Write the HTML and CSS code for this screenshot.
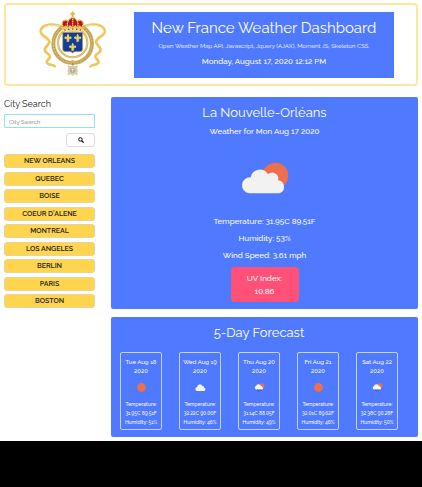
FILE: index.html
```html
<!DOCTYPE html>
<html lang="en">
<head>
<meta charset="utf-8">
<meta name="viewport" content="width=device-width, initial-scale=1">
<title>New France Weather Dashboard</title>
<link rel="stylesheet" href="styles.css">
</head>
<body>
<svg class="defs" aria-hidden="true">
  <symbol id="lily" viewBox="0 0 24 28">
    <path d="M12 0C7 6 8 10 10 14C8 7 1 7 1 13c0 4 4 5 6 2c1 1 2 2 2 3H7v3h3c-1 2-2 3-3 4c2 0 3 0 4-1l1 4 1-4c1 1 2 1 4 1c-1-1-2-2-3-4h3v-3h-2c0-1 1-2 2-3c2 3 6 2 6-2c0-6-7-6-9 1C16 10 17 6 12 0z" fill="#f6d35e"/>
  </symbol>
  <symbol id="sun" viewBox="0 0 10 10"><circle cx="5" cy="5" r="4.9" fill="#ee6f4b"/></symbol>
  <symbol id="cloud" viewBox="0 0 12 8">
    <path d="M2.5 7.7a2 2 0 0 1-.2-4A3 3 0 0 1 8 2.3a1.8 1.8 0 0 1 2 1.9a1.8 1.8 0 0 1 0 3.5z" fill="#f5f5f5"/>
  </symbol>
  <symbol id="rain" viewBox="0 0 11 9">
    <circle cx="7.7" cy="2.9" r="2.7" fill="#ee6f4b"/>
    <path d="M2 6.4a1.7 1.7 0 0 1 .1-3.3a2.4 2.4 0 0 1 4.6-.4a1.5 1.5 0 0 1 1.5 1.3a1.3 1.3 0 0 1 0 2.4z" fill="#f5f5f5"/>
    <path d="M3.5 6.5l-.5 1.4M5.3 6.5l-.7 2M7 6.5l-.5 1.4" stroke="#4a4f68" stroke-width=".8"/>
  </symbol>
</svg>
<div class="page">
  <header class="banner">
    <svg class="crest" viewBox="0 0 225 225" role="img" aria-label="Coat of arms of New France">
      <g fill="none" stroke-linecap="round" stroke-linejoin="round">
        <path d="M78 58C55 49 20 50 17 72c-2 16 22 17 26 31c2 10-18 17-13 29c3 8 14 7 15 17c1 7-13 10-9 18c4 9 18 4 23 11" stroke="#ecc65c" stroke-width="8"/>
        <path d="M148 58C171 49 206 50 209 72c2 16-22 17-26 31c-2 10 18 17 13 29c-3 8-14 7-15 17c-1 7 13 10 9 18c-4 9-18 4-23 11" stroke="#ecc65c" stroke-width="8"/>
        <path d="M76 58C56 51 23 54 20 72c0 10 18 14 24 25M150 58C170 51 203 54 206 72c0 10-18 14-24 25" stroke="#fbe39a" stroke-width="3"/>
        <circle cx="113" cy="110" r="58" stroke="#d5b35c" stroke-width="12"/>
        <circle cx="113" cy="110" r="58" stroke="#b5954b" stroke-width="7" stroke-dasharray="3 7"/>
        <circle cx="113" cy="110" r="58" stroke="#f6e3a8" stroke-width="2" stroke-dasharray="5 4"/>
        <circle cx="113" cy="107" r="44" stroke="#d2ae57" stroke-width="6"/>
        <circle cx="113" cy="107" r="44" stroke="#f5dfa0" stroke-width="2" stroke-dasharray="3 3"/>
      </g>
      <path d="M83 76h60v50q0 8-8 8h-15q-5 0-7 5q-2-5-7-5H91q-8 0-8-8z" fill="#123f9b" stroke="#d7b14c" stroke-width="2"/>
      <use href="#lily" x="87" y="80" width="24" height="27"/>
      <use href="#lily" x="116" y="80" width="24" height="27"/>
      <use href="#lily" x="101" y="107" width="24" height="27"/>
      <path d="M88 66C72 45 86 34 101 40q5-9 12-9q7 0 12 9c15-6 29 5 13 26z" fill="#b31523"/>
      <path d="M87 64C73 43 88 37 101 41M101 64C92 48 99 37 113 30M113 64V30M125 64C134 48 127 37 113 30M139 64c14-21-1-27-14-23" fill="none" stroke="#f1ce65" stroke-width="4" stroke-dasharray="5 1"/>
      <path d="M80 57l5 4 7-6 7 6 6-7 8 7 8-7 6 7 7-6 7 6 5-4-4 14q-29 8-58 0z" fill="#edc55a"/>
      <path d="M84 68q29-8 58 0v6q-29-7-58 0z" fill="#f6df9b"/>
      <g fill="#c62835"><circle cx="90" cy="69" r="2.5"/><circle cx="113" cy="66" r="2.5"/><circle cx="136" cy="69" r="2.5"/></g>
      <g fill="#2856ad"><circle cx="101" cy="67" r="2.5"/><circle cx="125" cy="67" r="2.5"/></g>
      <path d="M113 12l4 6 5 2-5 3-2 8h-4l-2-8-5-3 5-2z" fill="#dfb64d"/>
      <circle cx="113" cy="165" r="6" fill="#d6b561"/>
      <path d="M113 168v8" stroke="#a98943" stroke-width="4"/>
      <path d="M97 175l11 3 5-4 5 4 11-3-3 11 4 5-4 4 3 10-11-3-5 5-5-5-11 3 3-10-4-4 4-5z" fill="#d8cda4"/>
      <circle cx="113" cy="190" r="8" fill="#a9aea2"/>
      <path d="M113 184v12M108 188h10" stroke="#eef0e8" stroke-width="2"/>
    </svg>
    <div class="banner-text">
      <h1>New France Weather Dashboard</h1>
      <p class="credits">Open Weather Map API, Javascript, Jquery (AJAX), Moment JS, Skeleton CSS.</p>
      <p class="now">Monday, August 17, 2020 12:12 PM</p>
    </div>
  </header>

  <div class="layout">
    <aside class="sidebar">
      <form class="search">
        <label for="city">City Search</label>
        <input id="city" type="text" placeholder="City Search">
        <button class="go" type="button" aria-label="Search">
          <svg viewBox="0 0 12 12"><circle cx="4.8" cy="4.8" r="3.5" fill="none" stroke="#111" stroke-width="2"/><path d="M7.5 7.5l3.2 3.2" stroke="#111" stroke-width="2.4" stroke-linecap="round"/></svg>
        </button>
      </form>
      <div class="cities">
        <button type="button">NEW ORLEANS</button>
        <button type="button">QUEBEC</button>
        <button type="button">BOISE</button>
        <button type="button">COEUR D'ALENE</button>
        <button type="button">MONTREAL</button>
        <button type="button">LOS ANGELES</button>
        <button type="button">BERLIN</button>
        <button type="button">PARIS</button>
        <button type="button">BOSTON</button>
      </div>
    </aside>

    <main class="panel current">
      <h2>La Nouvelle-Orléans</h2>
      <p>Weather for Mon Aug 17 2020</p>
      <svg class="sky" viewBox="0 0 144 96" role="img" aria-label="Partly cloudy">
        <circle cx="103" cy="41" r="39" fill="#ee6f4b"/>
        <path d="M25 94A24 24 0 0 1 29 46A28 28 0 0 1 81 37A18 18 0 0 1 111 55A20 20 0 0 1 115 94z" fill="#f2f2f2"/>
      </svg>
      <p>Temperature: 31.95C 89.51F</p>
      <p>Humidity: 53%</p>
      <p>Wind Speed: 3.61 mph</p>
      <div class="uv">UV Index:<br>10.86</div>
    </main>

    <section class="panel forecast">
      <h2>5-Day Forecast</h2>
      <div class="days">
        <article class="day">
          <h3>Tue Aug 18<br>2020</h3>
          <svg role="img" aria-label="Sunny"><use href="#sun"/></svg>
          <p>Temperature:<br>31.95C 89.51F<br>Humidity: 51%</p>
        </article>
        <article class="day">
          <h3>Wed Aug 19<br>2020</h3>
          <svg role="img" aria-label="Cloudy"><use href="#cloud"/></svg>
          <p>Temperature:<br>32.22C 90.00F<br>Humidity: 46%</p>
        </article>
        <article class="day">
          <h3>Thu Aug 20<br>2020</h3>
          <svg role="img" aria-label="Showers"><use href="#rain"/></svg>
          <p>Temperature:<br>31.14C 88.05F<br>Humidity: 49%</p>
        </article>
        <article class="day">
          <h3>Fri Aug 21<br>2020</h3>
          <svg role="img" aria-label="Sunny"><use href="#sun"/></svg>
          <p>Temperature:<br>32.01C 89.62F<br>Humidity: 46%</p>
        </article>
        <article class="day">
          <h3>Sat Aug 22<br>2020</h3>
          <svg role="img" aria-label="Showers"><use href="#rain"/></svg>
          <p>Temperature:<br>32.38C 90.28F<br>Humidity: 50%</p>
        </article>
      </div>
    </section>
  </div>
</div>
</body>
</html>
```
FILE: styles.css
```css
* { box-sizing: border-box; }

html { background: #000; }

body {
  margin: 0;
  font-family: Raleway, Lato, "Open Sans", sans-serif;
  font-size: 8px;
  font-weight: 500;
  line-height: 17px;
  color: #222;
}

h1, h2, h3, p { margin: 0; }

h1, h2 { font-weight: 400; }

h3 { font-weight: 500; }

button, input { font-family: inherit; margin: 0; }

.defs { display: none; }

.page {
  padding: 3px 4px 4px;
  background: #fff;
}

.banner {
  display: grid;
  grid-template-columns: 128px 1fr;
  align-items: center;
  padding: 2px 22px 2px 0;
  border: 2px solid #ffe797;
  border-radius: 4px;
}

.crest {
  width: 75px;
  height: 75px;
  justify-self: center;
  margin-left: 4px;
}

.banner-text {
  padding: 5px 0 9px;
  background: #4f7aff;
  color: #fff;
  text-align: center;
}

.banner h1 { font-size: 15px; line-height: 22px; }

.credits { font-size: 6px; line-height: 14px; font-weight: 400; }

.now { line-height: 16px; }

.layout {
  display: grid;
  grid-template-columns: 91fr 307fr;
  gap: 8px 16px;
  margin-top: 11px;
}

.sidebar {
  display: flex;
  flex-direction: column;
  gap: 7px;
  padding-bottom: 1px;
}

.search {
  display: flex;
  flex-direction: column;
}

.search label { font-size: 9px; font-weight: 400; line-height: 14px; margin-bottom: 3px; }

.search input {
  width: 100%;
  height: 14px;
  padding: 0 4px;
  border: 1px solid #91e1f3;
  border-radius: 1px;
  font-size: 6px;
  color: #555;
}

.search input::placeholder { color: #777; }

.go {
  display: flex;
  align-items: center;
  justify-content: center;
  align-self: flex-end;
  width: 29px;
  height: 14px;
  margin-top: 5px;
  padding: 0;
  border: 1px solid #ddd;
  border-radius: 3px;
  background: #fff;
}

.go svg { width: 6px; height: 6px; }

.cities {
  flex: 1;
  display: flex;
  flex-direction: column;
  justify-content: space-between;
}

.cities button {
  height: 14px;
  padding: 0;
  border: 1px solid #e5d59c;
  border-radius: 3px;
  background: #ffd54f;
  color: #222;
  font-size: 7px;
  font-weight: 600;
  line-height: 12px;
}

.panel {
  border-radius: 2px;
  background: #4f7aff;
  color: #fff;
  text-align: center;
}

.panel h2 { font-size: 13px; line-height: 20px; }

.current {
  display: flex;
  flex-direction: column;
  align-items: center;
  padding: 6px 0 7px;
}

.sky { width: 48px; height: 32px; margin: 22px 0 19px; }

.uv {
  width: 68px;
  margin-top: 3px;
  padding: 5px 0 4px;
  border-radius: 4px;
  background: #ff5077;
  line-height: 13px;
}

.forecast {
  grid-column: 2;
  padding: 6px 20px 7px 9px;
}

.days {
  display: flex;
  justify-content: space-between;
  margin-top: 9px;
}

.day {
  display: flex;
  flex-direction: column;
  align-items: center;
  width: 42px;
  padding: 4px 0 2px;
  border: 1px solid #c3d1ff;
  border-radius: 2px;
  font-size: 5px;
  line-height: 9px;
}

.day h3 { font-size: 6px; line-height: 9px; }

.day svg { width: 11px; height: 9px; margin: 8px 0; }
```
